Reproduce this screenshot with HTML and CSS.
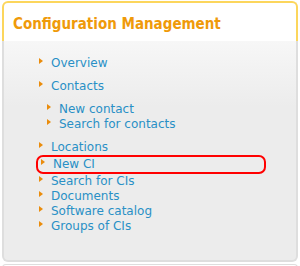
FILE: index.html
```html
<!DOCTYPE html>
<html lang="en">
<head>
  <meta charset="UTF-8" />
  <title>Configuration Management</title>
  <link rel="stylesheet" href="styles.css">
</head>
<body>
  <div class="box">
    <div class="box-head">
      <h2>Configuration Management</h2>
    </div>
    <div class="box-body">
      <ul class="menu">
        <li><a href="#">Overview</a></li>
      </ul>
      <ul class="menu">
        <li><a href="#">Contacts</a></li>
      </ul>
      <ul class="menu sub">
        <li><a href="#">New contact</a></li>
        <li><a href="#">Search for contacts</a></li>
      </ul>
      <ul class="menu">
        <li><a href="#">Locations</a></li>
        <li class="marked"><a href="#">New CI</a></li>
        <li><a href="#">Search for CIs</a></li>
        <li><a href="#">Documents</a></li>
        <li><a href="#">Software catalog</a></li>
        <li><a href="#">Groups of CIs</a></li>
      </ul>
    </div>
  </div>
  <div class="box next"></div>
</body>
</html>
```

FILE: styles.css
```css
body {
  margin: 0;
  padding: 1px 2px 0 2px;
  background-color: #ffffff;
  font-family: "DejaVu Sans", sans-serif;
}

.box {
  width: 296px;
}

.box-head {
  background-color: #ffffff;
  border: 2px solid #fcd65c;
  border-bottom: none;
  border-radius: 6px 6px 0 0;
  height: 38px;
}

.box-head h2 {
  margin: 0;
  padding: 12px 0 0 9px;
  font-family: "DejaVu Sans Condensed", "DejaVu Sans", sans-serif;
  font-stretch: condensed;
  font-size: 15px;
  line-height: 18px;
  font-weight: bold;
  color: #ef9a0a;
}

.box-body {
  background: linear-gradient(#f7f7f7, #ececec 30%, #ececec);
  border: 2px solid #dedede;
  border-top: none;
  border-radius: 0 0 6px 6px;
  height: 221px;
  padding-top: 15px;
  box-sizing: border-box;
}

.menu {
  list-style: none;
  margin: 0 0 8px 0;
  padding: 0 0 0 47px;
}

.menu.sub {
  padding-left: 55px;
}

.menu li {
  position: relative;
  font-size: 12px;
  line-height: 15px;
}

.menu li::before {
  content: "";
  position: absolute;
  left: -12px;
  top: 2px;
  border-left: 4px solid #ea8c0c;
  border-top: 3px solid transparent;
  border-bottom: 3px solid transparent;
}

.menu a {
  color: #2990c6;
  text-decoration: none;
}

/* red annotation ring round the "New CI" entry */
.menu li.marked {
  margin: 0 30px 0 -15px;
  padding-left: 15px;
  border: 2px solid #ff0000;
  border-radius: 7px;
}

.menu li.marked::before {
  left: 3px;
}

.box.next {
  margin-top: 2px;
  height: 4px;
  border: 1px solid #dedede;
  border-bottom: none;
  border-radius: 4px 4px 0 0;
  box-sizing: border-box;
}
```
